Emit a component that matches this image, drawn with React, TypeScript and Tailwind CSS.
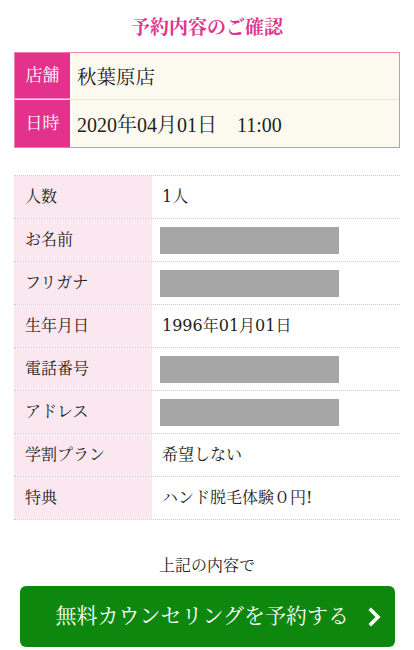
import React from "react";

const serif = {
  fontFamily:
    '"DejaVu Serif", "Noto Serif CJK JP", "Noto Sans CJK JP", serif',
};

const narrowSerif = {
  fontFamily:
    '"Liberation Serif", "Noto Serif CJK JP", "Noto Sans CJK JP", serif',
};

type Row = { label: string; value?: string; masked?: boolean };

const rows: Row[] = [
  { label: "人数", value: "1人" },
  { label: "お名前", masked: true },
  { label: "フリガナ", masked: true },
  { label: "生年月日", value: "1996年01月01日" },
  { label: "電話番号", masked: true },
  { label: "アドレス", masked: true },
  { label: "学割プラン", value: "希望しない" },
  { label: "特典", value: "ハンド脱毛体験０円!" },
];

export default function App() {
  return (
    <div className="min-h-[650px] w-[414px] bg-white text-[#222]" style={serif}>
      <h1 className="pt-[14px] text-center text-[19px] leading-[26px] font-bold text-[#e0338b]">
        予約内容のご確認
      </h1>

      {/* store / date box */}
      <div
        className="mx-[14px] mt-[12px] border border-[#f07fb4]"
        style={narrowSerif}
      >
        <div className="flex h-[47px] border-b border-[#ece6da]">
          <div className="flex w-[55px] shrink-0 items-center justify-center border-b border-[#f08cbd] bg-[#e4318c] text-[17px] text-white">
            店舗
          </div>
          <div className="flex flex-1 items-center bg-[#fcfaef] pt-[3px] pl-[7px] text-[19.5px]">
            秋葉原店
          </div>
        </div>
        <div className="flex h-[47px]">
          <div className="flex w-[55px] shrink-0 items-center justify-center bg-[#e4318c] text-[17px] text-white">
            日時
          </div>
          <div className="flex flex-1 items-center bg-[#fcfaef] pt-[2px] pl-[7px] text-[20px]">
            2020年04月01日　11:00
          </div>
        </div>
      </div>

      {/* detail table */}
      <div className="mx-[14px] mt-[27px] border-t border-dotted border-[#cfcfcf]">
        {rows.map((r) => (
          <div
            key={r.label}
            className="flex h-[43px] border-b border-dotted border-[#cfcfcf]"
          >
            <div className="flex w-[138px] shrink-0 items-center bg-[#fbe7f0] pl-[11px] text-[16px]">
              {r.label}
            </div>
            <div className="flex flex-1 items-center pl-[8px] text-[16px]">
              {r.masked ? (
                <div className="h-[27px] w-[179px] bg-[#a6a6a6]" />
              ) : (
                <span className="pl-[2px]">{r.value}</span>
              )}
            </div>
          </div>
        ))}
      </div>

      <p className="mt-[34px] text-center text-[16px] leading-[24px]">
        上記の内容で
      </p>

      <button
        type="button"
        className="mx-[20px] mt-[8px] flex h-[61px] w-[375px] items-center justify-end rounded-[6px] bg-[#0e870e] pr-[13px] text-white"
      >
        <span className="text-[21px]">無料カウンセリングを予約する</span>
        <svg
          width="14"
          height="20"
          viewBox="0 0 14 20"
          className="ml-[19px]"
          fill="none"
          stroke="white"
          strokeWidth="3.6"
          strokeLinecap="square"
        >
          <path d="M3 3l7 7-7 7" />
        </svg>
      </button>
    </div>
  );
}
